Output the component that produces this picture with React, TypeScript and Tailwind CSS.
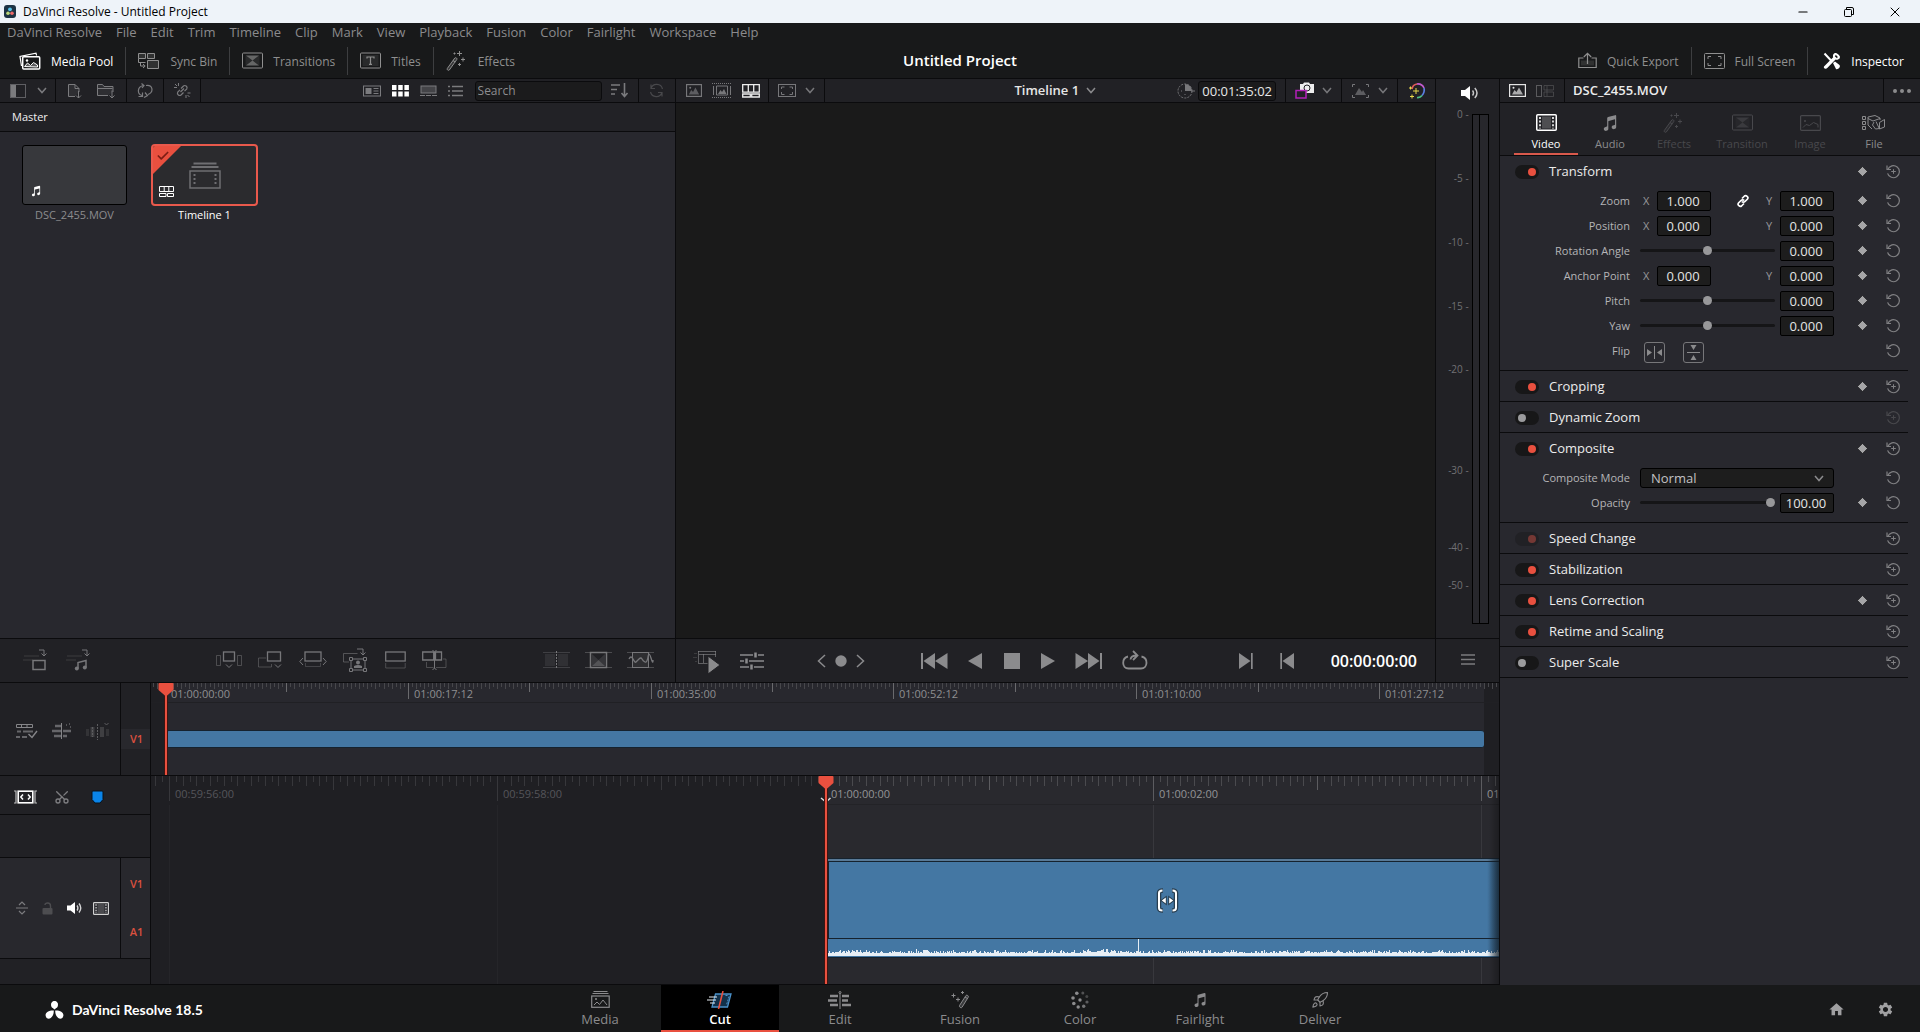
import { useState } from "react";
import type { ReactNode } from "react";
import { clsx } from "clsx";
import { Check, Minus, Rocket, Scissors, X } from "lucide-react";
import { IoMusicalNotes } from "react-icons/io5";
import { MdHome, MdSettings } from "react-icons/md";

type IconProps = { w: number; h: number; className?: string; children: ReactNode };

function Icon({ w, h, className, children }: IconProps) {
  return (
    <svg
      width={w}
      height={h}
      viewBox={`0 0 ${w} ${h}`}
      fill="none"
      stroke="currentColor"
      className={clsx("shrink-0", className)}
      aria-hidden="true"
    >
      {children}
    </svg>
  );
}

/* ---------- icons ---------- */

const MediaPoolIcon = () => (
  <Icon w={22} h={18}>
    <path d="M2.5 14 1 4.5 17 1.2l.6 2.3" strokeWidth="1.2" />
    <rect x="3.7" y="4.7" width="17" height="12.3" rx="1" strokeWidth="1.5" />
    <circle cx="8" cy="8.5" r="1.2" fill="currentColor" stroke="none" />
    <path d="M5.5 14.5 8.5 11l3 2.5 3-3 4 2.5v2z" fill="currentColor" fillOpacity=".3" />
  </Icon>
);

const SyncBinIcon = () => (
  <Icon w={22} h={18}>
    <path d="M.5 1.5h7v5h-7zM9.5 1.5h7v5h-7zM9.5 8.5h11v8h-11z" fill="currentColor" fillOpacity=".2" />
    <path d="M.5 6.5v4h7M2.5 10.5V14h4M5 12l2.200 2L5 16" />
  </Icon>
);

const TransitionIcon = () => (
  <Icon w={21} h={17}>
    <rect x=".5" y="1" width="20" height="15" rx="1" />
    <path d="M4 3.500h13L10.500 8.500zM4 13.500h13L10.500 8.500z" fill="currentColor" fillOpacity=".6" stroke="none" />
    <path d="M3.500 3.500h14v10h-14z" fill="currentColor" fillOpacity=".15" stroke="none" />
  </Icon>
);

const TitlesIcon = () => (
  <Icon w={21} h={17}>
    <rect x=".5" y="1" width="20" height="15" rx="1" />
    <rect x="2.500" y="3" width="16" height="11" fill="currentColor" fillOpacity=".15" stroke="none" />
    <path d="M7 6.500V5h7v1.500M10.500 5v7M9 12.300h3" strokeWidth="1.200" />
  </Icon>
);

const WandIcon = () => (
  <Icon w={22} h={20}>
    <path d="M1.300 17.500 8.800 7c.8-1 2.800.4 2 1.500L3.300 19c-.8 1-2.800-.4-2-1.500zM7 9.500l2.200 1.600" fill="currentColor" fillOpacity=".25" />
    <path d="M13.500 0v5M11 2.500h5M17 6.500v4M15 8.500h4M13.500 12v3M12 13.500h3M8.500 1.500v2M7.500 2.500h2" />
  </Icon>
);

const ExportIcon = () => (
  <Icon w={19} h={17}>
    <path d="M5.500 6H.800v9.500h17.400V6h-4.700" strokeWidth="1.200" />
    <path d="M3 8.500h13v5H3z" fill="currentColor" fillOpacity=".2" stroke="none" />
    <path d="M9.500 12V1.500M5.800 5l3.700-3.700L13.200 5" strokeWidth="1.200" />
  </Icon>
);

const FrameIcon = () => (
  <Icon w={21} h={16}>
    <rect x=".5" y=".5" width="20" height="15" rx="1" />
    <path d="M4 6V3.500h3M14 3.500h3V6M17 10v2.500h-3M7 12.500H4V10" />
  </Icon>
);

const InspectorIcon = () => (
  <Icon w={18} h={18}>
    <path d="M1.500 1.500 9 9.500M15.500 6.500a3.200 3.200 0 0 0-3-4.300M12 6 3 15.500" strokeWidth="2" />
    <path d="M16.500 3.500 14 6.200l-2.200-2 2-3C11 .500 9.300 3 10.200 5.300L1 14.500c-.8 1.500 1 3 2.500 2L12.500 7.600c2.600 1 5-1.300 4-4.100zM10 11l2-1.500 4.500 3.500c1.500 2-1.500 5-3.500 4z" fill="currentColor" stroke="none" />
  </Icon>
);

const PictureIcon = ({ w = 17, h = 13 }: { w?: number; h?: number }) => (
  <svg width={w} height={h} viewBox="0 0 17 13" preserveAspectRatio="none" fill="none" stroke="currentColor" className="shrink-0" aria-hidden="true">
    <rect x=".6" y=".6" width="15.800" height="11.800" strokeWidth="1.200" />
    <path d="M3 10.500 5.500 6l2 2 2.500-4.500 4 7z" fill="currentColor" fillOpacity=".7" stroke="none" />
    <circle cx="4.500" cy="3.700" r="1" fill="currentColor" stroke="none" />
  </svg>
);

const ImageTabIcon = () => (
  <Icon w={21} h={16}>
    <rect x=".6" y=".6" width="19.800" height="14.800" rx="1" strokeWidth="1.200" />
    <path d="M3 12.500 6 9.500l3.500 1 4-3 4.500 2v3" />
    <circle cx="5" cy="6" r="1" fill="currentColor" stroke="none" />
  </Icon>
);

const FilmIcon = ({ w = 21, h = 17 }: { w?: number; h?: number }) => (
  <svg width={w} height={h} viewBox="0 0 21 17" fill="none" stroke="currentColor" className="shrink-0" aria-hidden="true">
    <rect x=".75" y=".75" width="19.500" height="15.500" rx="1" strokeWidth="1.500" />
    <rect x="6" y="2.500" width="9" height="12" fill="currentColor" fillOpacity=".2" stroke="none" />
    <path d="M4 3v11.500M17 3v11.500" strokeWidth="1.600" strokeDasharray="2 1.600" />
  </svg>
);

const SpeakerIcon = () => (
  <Icon w={18} h={14}>
    <path d="M0 4h4l5-4v14L4 10H0z" fill="currentColor" stroke="none" />
    <path d="M11.500 4.500q2 2.500 0 5M13.800 2q4.400 5 0 10" strokeWidth="1.500" opacity=".75" />
  </Icon>
);

const FileTabIcon = () => (
  <Icon w={24} h={16}>
    <path d="M.5 1.500h3v3h-3zM.5 6.500h3v3h-3zM.5 11.500h3v3h-3zM6 2l7-1.500L18 3v2M6 2v8l4 4M6 3.500 11 6l7-2.500M14 6.500l3.500 7.500V8M22.500 4.500l-5 3v6.500l5-2zM12 7l-1.500 3 3 4 4-.5" />
  </Icon>
);

const LinkIcon = () => (
  <Icon w={14} h={14}>
    <path d="M6 4.500 8.500 2c1.500-1.300 4.500 1 3 3L9 7.500c-1 1-2.500.8-3.200 0M8 9.500 5.500 12c-1.500 1.300-4.500-1-3-3L5 6.500c1-1 2.500-.8 3.200 0" strokeWidth="1.700" />
  </Icon>
);

const ResetIcon = ({ plus = false }: { plus?: boolean }) => (
  <Icon w={15} h={15}>
    <path d="M1.800 5.500a6 6 0 1 1-.2 3.800" strokeWidth="1.200" />
    <path d="M1 1.500v4h4" strokeWidth="1.200" />
    {plus && <path d="M7.500 5.200v4.600M5.200 7.500h4.600" />}
  </Icon>
);

const Chevron = ({ className }: { className?: string }) => (
  <Icon w={10} h={7} className={className}>
    <path d="m1 1 4 4.500L9 1" strokeWidth="1.500" />
  </Icon>
);

/* ---------- shared bits ---------- */

function IconButton({ label, className, children }: { label: string; className?: string; children: ReactNode }) {
  return (
    <button type="button" aria-label={label} className={clsx("flex shrink-0 items-center justify-center", className)}>
      {children}
    </button>
  );
}

const Divider = () => <div className="w-px self-stretch bg-[#0b0b0d]" />;

/* ---------- top ---------- */

const MENUS = [
  "DaVinci Resolve", "File", "Edit", "Trim", "Timeline", "Clip", "Mark", "View",
  "Playback", "Fusion", "Color", "Fairlight", "Workspace", "Help",
];

function TitleBar() {
  return (
    <header className="flex h-[23px] items-center bg-[#eef3f9] pr-[2px] pl-1 text-xs text-black">
      <Icon w={12} h={13}>
        <rect width="12" height="13" rx="3" fill="#1d3344" stroke="none" />
        <circle cx="6" cy="4.300" r="1.900" fill="#58c3e8" stroke="none" />
        <circle cx="4" cy="8.300" r="1.800" fill="#bcd77a" stroke="none" />
        <circle cx="8" cy="8.300" r="1.800" fill="#ee6a6a" stroke="none" />
      </Icon>
      <span className="ml-[7px] flex-1">DaVinci Resolve - Untitled Project</span>
      <IconButton label="Minimize" className="w-[46px]"><Minus size={14} strokeWidth={2} /></IconButton>
      <IconButton label="Restore" className="w-[46px]">
        <Icon w={10} h={10}>
          <rect x=".5" y="2.500" width="7" height="7" rx="1" />
          <path d="M2.500 2V.500H8Q9.500.500 9.500 2v5.500H8" />
        </Icon>
      </IconButton>
      <IconButton label="Close" className="w-[46px]"><X size={16} strokeWidth={1.500} /></IconButton>
    </header>
  );
}

function ToolbarButton({ icon, label, active }: { icon: ReactNode; label: string; active?: boolean }) {
  return (
    <button type="button" className={clsx("flex items-center gap-[10px] px-3", active ? "text-white" : "text-[#8f8f8f]")}>
      {icon}
      <span className="pt-[2px]">{label}</span>
    </button>
  );
}

function TopToolbar() {
  const sep = <div className="h-7 w-px bg-[#3d3e40]" />;
  return (
    <div className="grid h-9 grid-cols-[1fr_auto_1fr] items-center border-b border-[#0b0b0d] text-xs">
      <div className="flex items-center pl-[7px]">
        <ToolbarButton icon={<MediaPoolIcon />} label="Media Pool" active />
        {sep}
        <ToolbarButton icon={<SyncBinIcon />} label="Sync Bin" />
        {sep}
        <ToolbarButton icon={<TransitionIcon />} label="Transitions" />
        {sep}
        <ToolbarButton icon={<TitlesIcon />} label="Titles" />
        {sep}
        <ToolbarButton icon={<WandIcon />} label="Effects" />
      </div>
      <h1 className="pb-[2px] text-[15px] font-semibold text-white">Untitled Project</h1>
      <div className="flex items-center justify-end pr-1">
        <ToolbarButton icon={<ExportIcon />} label="Quick Export" />
        {sep}
        <ToolbarButton icon={<FrameIcon />} label="Full Screen" />
        {sep}
        <div className="w-[3px]" />
        <ToolbarButton icon={<InspectorIcon />} label="Inspector" active />
      </div>
    </div>
  );
}

/* ---------- media pool ---------- */

function MediaPool() {
  return (
    <section className="flex w-[45%] flex-col bg-[#28282e]">
      <div className="flex h-6 items-center border-b border-[#0b0b0d] bg-[#212125] text-[#7b7b7e]">
        <div className="flex w-[55px] items-center justify-between pr-2 pl-[10px]">
          <IconButton label="Bin list">
            <Icon w={16} h={14}>
              <rect x=".5" y=".5" width="15" height="13" opacity=".7" />
              <rect x="1" y="1" width="5" height="12" fill="currentColor" stroke="none" />
            </Icon>
          </IconButton>
          <IconButton label="Bin list options"><Chevron /></IconButton>
        </div>
        <Divider />
        <div className="flex w-[70px] items-center justify-between px-[11px]">
          <IconButton label="Import media">
            <Icon w={15} h={16}>
              <path d="M8 13.500H1.500V1.500H8l4 4V9M8 1.500v4h4" fill="currentColor" fillOpacity=".15" />
              <path d="M11.500 8v7M9 12.500l2.500 2.500 2.500-2.500" />
            </Icon>
          </IconButton>
          <IconButton label="Import media folder">
            <Icon w={18} h={16}>
              <path d="M11 12.500H.500V1.500h5l1.500 2h9V9M.500 5.500h15" fill="currentColor" fillOpacity=".15" />
              <path d="M15 7.500v7.500M12.500 12.500 15 15l2.500-2.500" />
            </Icon>
          </IconButton>
        </div>
        <Divider />
        <IconButton label="Sync clips" className="w-9">
          <Icon w={16} h={15}>
            <path d="M5 12.500C0 11 0 3.500 6.500 2.500M4.500.500l2.500 2-2 2.500M9 2.500C16 1.500 17 9 11 11.500M8 9.500l2.500 3-3.500 2M1.500 13.500h4v-4" strokeWidth="1.200" />
          </Icon>
        </IconButton>
        <Divider />
        <IconButton label="Unlink" className="w-9">
          <Icon w={17} h={15}>
            <path d="M7 5.500 9.500 3c1.500-1.300 4.500.5 3.300 2.800L10.500 8.200M9.500 9.500 7 12c-1.500 1.300-4.500-.5-3.300-2.800L6 6.800M6.500 9l3.500-3.500" strokeWidth="1.200" />
            <path d="M4.500 0v3M1 1l2 2M0 4.500h3M16.500 10h-3M15.500 14l-2-2M12 15v-3" />
          </Icon>
        </IconButton>
        <Divider />
        <div className="ml-auto flex items-center gap-[11px] pr-3">
          <IconButton label="Metadata view">
            <Icon w={18} h={12}>
              <rect x=".5" y="1" width="17" height="10" />
              <rect x="2.500" y="3" width="6" height="6" fill="currentColor" stroke="none" />
              <path d="M10.500 3.500h5M10.500 6h5M10.500 8.500h5" />
            </Icon>
          </IconButton>
          <IconButton label="Thumbnail view" className="text-white">
            <Icon w={17} h={12}>
              <path d="M0 0h4.500v5H0zM6.200 0h4.500v5H6.200zM12.400 0h4.500v5h-4.500zM0 6.500h4.500v5H0zM6.200 6.500h4.500v5H6.200zM12.400 6.500h4.500v5h-4.500z" fill="currentColor" stroke="none" />
            </Icon>
          </IconButton>
          <IconButton label="Strip view">
            <Icon w={17} h={12}>
              <rect x="1" y="1" width="15" height="7" fill="currentColor" fillOpacity=".4" />
              <path d="M0 10.500h5M6 10.500h5M12 10.500h5" />
            </Icon>
          </IconButton>
          <IconButton label="List view">
            <Icon w={15} h={12}>
              <path d="M0 1.500h2M4 1.500h11M0 6h2M4 6h11M0 10.500h2M4 10.500h11" strokeWidth="1.600" />
            </Icon>
          </IconButton>
        </div>
        <input
          aria-label="Search media"
          placeholder="Search"
          className="h-5 w-[127px] rounded-[3px] border border-[#0b0b0d] bg-[#1b1b1c] px-[2px] text-xs text-[#ccc] placeholder:text-[#8d8d8f]"
        />
        <IconButton label="Sort" className="w-9 pl-px">
          <Icon w={18} h={15}>
            <path d="M0 2h9M0 6.500h6M0 11h4" strokeWidth="1.600" />
            <path d="M13.500 0v13M10.500 10l3 3.500 3-3.500" strokeWidth="1.600" />
          </Icon>
        </IconButton>
        <Divider />
        <IconButton label="Refresh" className="w-9 text-[#48484b]">
          <Icon w={15} h={15}>
            <path d="M13.500 6A6 6 0 0 0 2 5.500M1.500 9A6 6 0 0 0 13 9.500M2 1.500v4h4M13 13.500v-4H9" strokeWidth="1.200" />
          </Icon>
        </IconButton>
      </div>
      <div className="flex h-[29px] items-center border-b border-[#0b0b0d] bg-[#222226] pl-3 text-[11px] text-[#f0f0f0]">Master</div>

      <div className="flex flex-1 items-start gap-6 px-[22px] pt-3 text-[11px]">
        <figure className="w-[105px] text-center text-[#8c8c8e]">
          <div className="mt-px flex h-[60px] items-end rounded-[3px] border border-black bg-[#37383c] p-[7px] text-white">
            <IoMusicalNotes size={12} />
          </div>
          <figcaption className="mt-[2px]">DSC_2455.MOV</figcaption>
        </figure>
        <figure className="w-[107px] text-center text-white">
          <div className="relative flex h-[62px] items-center justify-center overflow-hidden rounded-[4px] border-2 border-[#e9594c] bg-[#2b2b2e] text-[#6f6f72]">
            <Icon w={32} h={27}>
              <path d="M4.500 1.500h23M2.500 5h27" strokeWidth="2" />
              <rect x="1" y="9" width="30" height="17" strokeWidth="1.500" />
              <path d="M5.500 12v12M26.500 12v12" strokeDasharray="2 2" strokeWidth="2" />
            </Icon>
            <svg width="28" height="28" className="absolute top-0 left-0" aria-hidden="true">
              <path d="M0 0h28L0 28z" fill="#e9503f" />
            </svg>
            <Check size={14} strokeWidth={3} className="absolute top-[3px] left-[3px] text-[#7d1d14]" />
            <Icon w={15} h={11} className="absolute bottom-[7px] left-[6px] text-white">
              <path d="M.5.5h14v5H.5zM5.200.500v5M9.800.500v5M.5 7.500H7v3H.5zM8.500 7.500h6v3h-6z" />
            </Icon>
          </div>
          <figcaption className="mt-px">Timeline 1</figcaption>
        </figure>
      </div>

      <div className="flex h-11 items-center border-t border-[#0b0b0d] bg-[#212125] pr-[21px] pb-[2px] pl-[22px] text-[#77777a]">
        <div className="flex gap-[17px]">
          <IconButton label="Append clip">
            <Icon w={26} h={24}>
              <path d="M2 8h15M1 12h10" opacity=".3" />
              <path d="M17 2h5v6M19.500 5.500 22 8l2.500-2.500" />
              <rect x="11" y="12.500" width="12" height="9" strokeWidth="1.500" />
            </Icon>
          </IconButton>
          <IconButton label="Append audio">
            <Icon w={26} h={24}>
              <path d="M2 8h15M1 12h10" opacity=".3" />
              <path d="M17 2h5v6M19.500 5.500 22 8l2.500-2.500" />
              <path d="M13 20.500v-6l8-2v7" strokeWidth="1.500" />
              <circle cx="11.800" cy="20.500" r="2" fill="currentColor" stroke="none" />
              <circle cx="19.800" cy="19.500" r="2" fill="currentColor" stroke="none" />
            </Icon>
          </IconButton>
        </div>
        <div className="mx-auto flex gap-4 pl-[29px]">
          <IconButton label="Smart insert">
            <Icon w={26} h={22}>
              <path d="M.5 6.500h4v10h-4zM21.500 6.500h4v10h-4z" opacity=".5" />
              <rect x="7.500" y="3" width="11" height="9" strokeWidth="1.300" />
              <path d="m10 15.500 3 3 3-3" />
            </Icon>
          </IconButton>
          <IconButton label="Append">
            <Icon w={25} h={22}>
              <path d="M8 9H.500v9h13v-3" opacity=".5" />
              <rect x="9.500" y="3" width="13" height="9" strokeWidth="1.300" />
              <path d="m17 15.500 3 3 3-3" />
            </Icon>
          </IconButton>
          <IconButton label="Ripple overwrite">
            <Icon w={28} h={22}>
              <rect x="6" y="3" width="16" height="9" strokeWidth="1.300" />
              <path d="M6.500 14v3.500h15V14" opacity=".4" />
              <path d="M4 9 .800 12.500 4 16M24 9l3.200 3.500L24 16" />
            </Icon>
          </IconButton>
          <IconButton label="Close up">
            <Icon w={26} h={24}>
              <path d="M6 14H.500V5.500h14" opacity=".6" />
              <path d="M14 1h6v6M17.500 4.500 20 7l2.500-2.500" />
              <path d="M8 11h14v11H8z" />
              <path d="M6.500 9.500h3v3h-3zM20.500 9.500h3v3h-3zM6.500 20.500h3v3h-3zM20.500 20.500h3v3h-3z" fill="#212125" />
              <path d="M11 20v-2q4-2 8 0v2z" fill="currentColor" stroke="none" />
              <circle cx="15" cy="14.500" r="2" fill="currentColor" stroke="none" />
            </Icon>
          </IconButton>
          <IconButton label="Place on top">
            <Icon w={21} h={20}>
              <rect x=".7" y="2" width="19.500" height="9" strokeWidth="1.300" />
              <path d="M.700 13v5h19.500v-5" opacity=".5" />
            </Icon>
          </IconButton>
          <IconButton label="Source overwrite">
            <Icon w={25} h={20}>
              <path d="M.700 2h11v8h-11zM13.500 2h6v8h-6z" strokeWidth="1.300" />
              <path d="M4.500 12v5.500h7M14 17.500h10V9h-3" opacity=".5" />
              <path d="M10.500 0 12.500 2v16l-2 2M14.500 0l-2 2v16l2 2" />
            </Icon>
          </IconButton>
        </div>
        <div className="flex gap-[15px]">
          <IconButton label="Cut">
            <Icon w={27} h={18}>
              <path d="M0 1.500h27M0 16.500h27" opacity=".35" />
              <path d="M2 3h10v12H2zM15 3h10v12H15z" fill="currentColor" fillOpacity=".18" stroke="none" />
              <path d="M13.500 0v18" strokeDasharray="2 1" />
            </Icon>
          </IconButton>
          <IconButton label="Dissolve">
            <Icon w={27} h={18}>
              <path d="M0 1.500h27M0 16.500h27" opacity=".5" />
              <rect x="5.500" y="1.500" width="16" height="15" strokeWidth="1.500" />
              <path d="m7 15 6.500-6 6.500 6z" fill="currentColor" fillOpacity=".6" stroke="none" />
              <path d="M7 3v12l6.500-6zM20 3v12l-6.500-6z" fill="currentColor" fillOpacity=".25" stroke="none" />
            </Icon>
          </IconButton>
          <IconButton label="Smooth cut">
            <Icon w={27} h={18}>
              <path d="M0 1.500h27M0 16.500h27" opacity=".5" />
              <rect x="5.500" y="1.500" width="16" height="15" fill="currentColor" fillOpacity=".15" />
              <path d="M2 8q2-4 4 0t3 3 3-3 3 0 3 3 3-5 3 1 2 2" strokeWidth="1.300" />
            </Icon>
          </IconButton>
        </div>
      </div>
    </section>
  );
}

/* ---------- viewer ---------- */

function Viewer() {
  return (
    <section className="flex min-w-0 flex-1 flex-col border-l border-[#0b0b0d] bg-[#1a1a1a]">
      <div className="grid h-6 grid-cols-[1fr_auto_1fr] border-b border-[#0b0b0d] bg-[#212125] text-[#77777a]">
        <div className="flex items-center">
          <div className="flex w-[92px] items-center gap-[10px] pl-[10px]">
            <IconButton label="Source clip"><PictureIcon w={16} h={13} /></IconButton>
            <IconButton label="Source tape">
              <Icon w={20} h={15}>
                <path d="M0 .5h20M0 14.500h20" strokeDasharray="1 1" />
                <path d="M4.500 3h11v9h-11zM1.500 3v9M18.500 3v9" />
                <path d="m6 11 2.500-4 1.500 2 2-3 2.500 5z" fill="currentColor" stroke="none" />
              </Icon>
            </IconButton>
            <IconButton label="Timeline viewer" className="text-[#ededed]">
              <Icon w={18} h={14}>
                <path d="M.7.700h16.600v7.500H.700zM6.300.700v7.500M11.700.700v7.500M.7 10h7.600v3H.700zM9.700 10h7.600v3H9.700z" strokeWidth="1.300" />
              </Icon>
            </IconButton>
          </div>
          <Divider />
          <button type="button" aria-label="Viewer size" className="flex w-[55px] items-center justify-between px-[9px]">
            <Icon w={18} h={14}>
              <rect x=".5" y=".5" width="17" height="12" />
              <path d="M3.500 5V3h3M11.500 3h3v2M14.500 8v2.500h-3M6.500 10.500h-3V8" />
            </Icon>
            <Chevron />
          </button>
          <Divider />
        </div>
        <button type="button" className="flex items-center gap-[7px] text-[13px] font-semibold text-[#e6e6e6]">
          Timeline 1
          <Chevron className="text-[#8b8b8d]" />
        </button>
        <div className="flex items-center justify-end">
          <Icon w={18} h={16} className="mr-[3px]">
            <circle cx="8" cy="8" r="7" strokeDasharray="2 1.200" />
            <path d="M8 8V1a7 7 0 0 1 7 7z" fill="currentColor" stroke="none" />
            <path d="M14 8h4M4 8h1M8 11v1" />
          </Icon>
          <div className="rounded-[3px] border border-[#0b0b0d] bg-[#1b1b1c] px-[3px] text-[13px] leading-[18px] text-[#e8e8e8]">00:01:35:02</div>
          <div className="w-[9px]" />
          <Divider />
          <button type="button" aria-label="Camera" className="flex w-[55px] items-center justify-between px-[9px]">
            <Icon w={20} h={17}>
              <path d="M5 2h3l1-1.500h5L15 2h4v9H5z" fill="#eee" stroke="none" />
              <circle cx="12" cy="6" r="3" stroke="#212125" />
              <rect x="1" y="8.500" width="10" height="7.500" fill="#212125" stroke="#b31fb8" strokeWidth="1.500" />
            </Icon>
            <Chevron />
          </button>
          <Divider />
          <button type="button" aria-label="Transform overlay" className="flex w-[55px] items-center justify-between px-[9px]">
            <Icon w={19} h={16}>
              <path d="M1.500 4V1.500H4M15 1.500h2.500V4M17.500 12v2.500H15M4 14.500H1.500V12" />
              <path d="m4 12 4-7 3 4 1-2 3 5z" fill="currentColor" stroke="none" opacity=".7" />
            </Icon>
            <Chevron />
          </button>
          <Divider />
          <IconButton label="Color enhance" className="w-[37px]">
            <Icon w={19} h={16}>
              <path d="M5 6a6 6 0 0 1 5-5" stroke="#e05a5a" strokeWidth="1.700" />
              <path d="M10 1q5-.500 7 4" stroke="#c45bd0" strokeWidth="1.700" />
              <path d="M17 5q1 4-2 7.500" stroke="#5a7ee0" strokeWidth="1.700" />
              <path d="M15 12.500q-2 2.500-5 2" stroke="#4fc087" strokeWidth="1.700" />
              <path d="M9 5v6M6 8h6M3.500 3.500v3M2 5h3M5 11.500v4M3 13.500h4" stroke="#e8d84a" />
            </Icon>
          </IconButton>
        </div>
      </div>

      <div className="flex-1" />

      <div className="flex h-11 items-center border-t border-[#0b0b0d] bg-[#212125] pl-[17px] text-[#8b8b8d]">
        <IconButton label="Fast review" className="mr-[18px]">
          <Icon w={29} h={28}>
            <path d="M5 4.500h18M6 7.500h17M6 16.500h9M5.500 4v13M10.500 7v9M22.500 4v6" opacity=".6" />
            <path d="M1 6.500h3M0 10.500h4M2 14.500h2" opacity=".25" />
            <path d="M15 9v18l12-9z" fill="currentColor" stroke="#212125" strokeWidth="1" />
          </Icon>
        </IconButton>
        <IconButton label="Tools" className="mr-[53px]">
          <Icon w={24} h={18}>
            <path d="M0 3h13M18 3h6M0 9h4M9 9h15M0 15h9M14 15h10" strokeWidth="1.600" />
            <path d="M15.500.500v5M6.500 6.500v5M11.500 12.500v5" strokeWidth="2.500" />
          </Icon>
        </IconButton>
        <IconButton label="Previous keyframe"><Icon w={9} h={14}><path d="M8 1 1.500 7 8 13" strokeWidth="1.500" /></Icon></IconButton>
        <IconButton label="Keyframe" className="mx-[9px]"><Icon w={12} h={12}><circle cx="6" cy="6" r="5.700" fill="currentColor" stroke="none" /></Icon></IconButton>
        <IconButton label="Next keyframe" className="mr-14"><Icon w={9} h={14}><path d="m1 1 6.500 6L1 13" strokeWidth="1.500" /></Icon></IconButton>
        <IconButton label="First frame" className="mr-5">
          <Icon w={27} h={16}><path d="M0 0h2v16H0zM14 0v16L2.500 8zM26.500 0v16L14 8z" fill="currentColor" stroke="none" /></Icon>
        </IconButton>
        <IconButton label="Play reverse" className="mr-[22px]">
          <Icon w={14} h={16}><path d="M14 0v16L0 8z" fill="currentColor" stroke="none" /></Icon>
        </IconButton>
        <IconButton label="Stop" className="mr-[21px]">
          <Icon w={16} h={16}><path d="M0 0h16v16H0z" fill="currentColor" stroke="none" /></Icon>
        </IconButton>
        <IconButton label="Play" className="mr-5">
          <Icon w={14} h={16}><path d="M0 0v16l14-8z" fill="currentColor" stroke="none" /></Icon>
        </IconButton>
        <IconButton label="Last frame" className="mr-5">
          <Icon w={27} h={16}><path d="M25 0h2v16h-2zM.500 0v16L13 8zM13 0v16l11.500-8z" fill="currentColor" stroke="none" /></Icon>
        </IconButton>
        <IconButton label="Loop">
          <Icon w={26} h={22}>
            <path d="M6 6.500C-.500 8-.500 18.500 6.500 18.500h12.500C26 18.500 26.500 8 19.500 6.500" strokeWidth="1.800" />
            <path d="M8.500 9.500q.500-4 6-4M11 1l4.500 4.500-4.500 4.500" strokeWidth="1.800" />
          </Icon>
        </IconButton>
        <div className="flex-1" />
        <IconButton label="Go to next" className="mr-[27px]">
          <Icon w={14} h={16}><path d="M0 0v16l11.500-8zM12 0h1.700v16H12z" fill="currentColor" stroke="none" /></Icon>
        </IconButton>
        <IconButton label="Go to previous" className="mr-[37px]">
          <Icon w={14} h={16}><path d="M14 0v16L2.500 8zM.3 0H2v16H.3z" fill="currentColor" stroke="none" /></Icon>
        </IconButton>
        <span className="mr-[18px] text-base font-semibold text-white">00:00:00:00</span>
      </div>
    </section>
  );
}

/* dB marks; span is the distance to the next mark on the scale */
const METER_MARKS = [
  { db: "0", span: 64 },
  { db: "-5", span: 64 },
  { db: "-10", span: 64 },
  { db: "-15", span: 63 },
  { db: "-20", span: 102 },
  { db: "-30", span: 77 },
  { db: "-40", span: 38 },
  { db: "-50", span: 39 },
];

function Meter() {
  return (
    <section className="flex w-16 flex-col border-l border-[#0b0b0d] bg-[#212125]">
      <div className="flex justify-center pt-[7px] pr-[15px] pl-[19px] text-white">
        <IconButton label="Mute" className="h-[14px]"><SpeakerIcon /></IconButton>
      </div>
      <div className="flex flex-1 justify-end gap-[3px] pt-[14px] pr-[10px] pb-[14px]">
        <ul className="flex w-9 flex-col text-right text-[10px] text-[#717174]">
          {METER_MARKS.map((m) => (
            <li key={m.db} className="h-0 leading-[0]" style={{ flexGrow: m.span }}>{m.db} -</li>
          ))}
        </ul>
        <div className="grid w-[19px] grid-cols-2 divide-x divide-black border border-black bg-[#27272c]">
          <div />
          <div />
        </div>
      </div>
      <div className="flex h-11 items-center justify-center border-t border-[#0b0b0d] pb-[2px]">
        <IconButton label="Meter options" className="text-[#7b7b7e]">
          <Icon w={14} h={11}><path d="M0 1h14M0 5.500h14M0 10h14" strokeWidth="1.300" /></Icon>
        </IconButton>
      </div>
    </section>
  );
}

/* ---------- timelines ---------- */

const TRACK_START = 15; // px from the canvas edge to 01:00:00:00 in the overview
const OVERVIEW_STEP = 242.8;
const OVERVIEW_LABELS = ["01:00:00:00", "01:00:17:12", "01:00:35:00", "01:00:52:12", "01:01:10:00", "01:01:27:12"];

function OverviewRuler() {
  const ticks = Array.from({ length: 345 }, (_, i) => i - 3);
  return (
    <svg className="absolute inset-0 h-full w-full" aria-label="Overview ruler">
      <path d="M0 19.500h3000" stroke="#202024" />
      {ticks.map((i) => {
        const x = TRACK_START - 0.5 + Math.round((i * OVERVIEW_STEP) / 60);
        const h = i % 60 === 0 ? 16 : i % 30 === 0 ? 9 : i % 2 ? 4 : 6;
        return <path key={i} d={`M${x} 0v${h}`} stroke={h > 6 ? "#6a6a6d" : "#47474b"} />;
      })}
      {OVERVIEW_LABELS.map((t, i) => (
        <text key={t} x={TRACK_START + 5 + Math.round(i * OVERVIEW_STEP)} y="15" fontSize="11" fill="#8f8f91">{t}</text>
      ))}
    </svg>
  );
}

function Playhead({ x }: { x: number }) {
  return (
    <svg className="pointer-events-none absolute inset-0 h-full w-full" aria-hidden="true">
      <path d={`M${x} 10v300`} stroke="#3c1512" strokeWidth="4" />
      <path d={`M${x} 10v300`} stroke="#e9503f" strokeWidth="2" />
      <path d={`M${x - 7.5} 1q0-1 1-1h13q1 0 1 1v6l-7.500 6.500-7.500-6.500z`} fill="#e9503f" />
    </svg>
  );
}

function Overview() {
  return (
    <section className="flex h-[94px] border-y border-[#0b0b0d]">
      <div className="flex w-[121px] items-center gap-[14px] border-r border-[#0b0b0d] bg-[#212125] pt-[3px] pl-[15px] text-[#858588]">
        <IconButton label="Timeline options">
          <Icon w={23} h={16}>
            <path d="M1.500 1.500h16v3h-16zM6.500 1.500v3M12 1.500v3" />
            <path d="M2 8.500h4M8 8.500h10M1 14h4M7 14h5" strokeWidth="1.800" opacity=".7" />
            <path d="m13.500 11 3.500 3.500L22 8" strokeWidth="1.400" />
          </Icon>
        </IconButton>
        <IconButton label="Split clips">
          <Icon w={20} h={16}>
            <path d="M3 3h7M0 8h9M2 13h7M11 8h8M11 13h4" strokeWidth="2.500" opacity=".7" />
            <path d="M9.500 0v16" />
            <path d="M14 2h1M17 1h1M18 4h1" />
          </Icon>
        </IconButton>
        <IconButton label="Boring detector">
          <Icon w={24} h={18} className="opacity-60">
            <path d="M4.500 5h4v10h-4zM14 5h4v10h-4z" fill="currentColor" fillOpacity=".5" stroke="none" />
            <path d="M0 7h3v7H0zM20 7h3v7h-3z" fill="currentColor" fillOpacity=".3" stroke="none" />
            <path d="M6.500 5v10M11.500 2v16" strokeDasharray="2 1" />
            <path d="m18.500 1 2 2 2-2" />
          </Icon>
        </IconButton>
      </div>
      <div className="flex w-[30px] items-start border-r border-[#0b0b0d] bg-[#212125] pt-[46px]">
        <button type="button" className="h-5 w-full bg-[#28282d] pl-[2px] text-[11px] font-semibold text-[#d9503f]">V1</button>
      </div>
      <div className="relative flex min-w-0 flex-1 bg-[#1f1f23]">
        <div className="mx-[15px] flex-1 bg-[#28282e] pt-[47px]">
          <div className="h-[18px] rounded-[3px] border-y border-[#15222e] bg-[#4477a3]" />
        </div>
        <OverviewRuler />
        <Playhead x={TRACK_START} />
      </div>
    </section>
  );
}

const DETAIL_STEP = 328; // two seconds
const DETAIL_LABELS = ["00:59:56:00", "00:59:58:00", "01:00:00:00", "01:00:02:00", "01:00:04:00"];

function DetailRuler() {
  const ticks = Array.from({ length: 198 }, (_, i) => i - 2);
  return (
    <svg className="absolute inset-0 h-full w-full" aria-label="Timeline ruler">
      <path d="M675 28.500h3000" stroke="#232327" />
      {ticks.map((i) => {
        const x = 18.5 + Math.round((i * DETAIL_STEP) / 48);
        const dim = x < 674;
        const h = i % 48 === 0 ? 25 : i % 24 === 0 ? 14 : i % 2 ? 6 : 10;
        return <path key={i} d={`M${x} 0v${h}`} stroke={dim ? "#37373b" : h > 10 ? "#5c5c60" : "#4a4a4e"} />;
      })}
      {DETAIL_LABELS.map((t, i) => (
        <g key={t}>
          <text x={24 + i * DETAIL_STEP} y="22" fontSize="11" fill={i < 2 ? "#55555a" : "#949496"}>{t}</text>
          <path d={`M${18.5 + i * DETAIL_STEP} 29v180`} stroke={i < 2 ? "#252529" : "#38383d"} />
        </g>
      ))}
    </svg>
  );
}

// Low room-tone level with small peaks, one bar per pixel
function wavePath(width: number) {
  let seed = 7;
  let d = "M0 18";
  for (let x = 0; x < width; x++) {
    seed = (seed * 16807) % 2147483647;
    const r = seed / 2147483647;
    const swell = Math.sin(x / 37) + Math.sin(x / 13);
    const h = x === 310 ? 18 : 4 + Math.round(r * r * r * r * 2 + (swell > 1 ? r * 2 : r));
    d += `V${18 - h}h1`;
  }
  return d + "V18z";
}

function TimelineClip() {
  return (
    <div className="relative h-[100px] border-y border-[#15222e] bg-[#4477a3]">
      <div className="h-[3px] border-b border-[#15222e] bg-[#587996]" />
      <div className="flex h-[77px] items-start border-b border-l border-[#15222e] pt-[26px] pl-[326px]">
        <Icon w={25} h={26}>
          <path d="M8 2.500Q4 2.500 4 5v15q0 2.500 4 2.500M17 2.500q4 0 4 2.500v15q0 2.500-4 2.500" stroke="#2a3f50" strokeWidth="4.500" />
          <path d="M7.500 2.500Q4 2.500 4 5v15q0 2.500 3.500 2.500M17.500 2.500q3.500 0 3.500 2.500v15q0 2.500-3.500 2.500" stroke="#fff" strokeWidth="2" />
          <path d="M10.800 9.500v6L6.800 12.500zM14.200 9.500v6l4-3z" fill="#fff" stroke="#2a3f50" strokeWidth="2" paintOrder="stroke" />
        </Icon>
      </div>
      <svg className="block h-[17px] w-full" aria-label="Audio waveform">
        <path d={wavePath(1800)} fill="#e6eef5" />
      </svg>
      <div className="absolute inset-y-0 right-0 w-3 bg-linear-to-r from-transparent to-[#1a2b3a]/70" />
    </div>
  );
}

function DetailTimeline() {
  return (
    <section className="flex h-[209px] border-b border-[#0b0b0d]">
      <div className="flex w-[151px] flex-col border-r border-[#0b0b0d] bg-[#212125]">
        <div className="flex h-[39px] items-center border-b border-[#0b0b0d] pt-1 pl-[13px]">
          <IconButton label="Trim mode" className="text-white">
            <Icon w={25} h={14}>
              <rect x="5.200" y="1.200" width="14.600" height="11.600" strokeWidth="1.600" />
              <path d="M1 1h2v12H1M24 1h-2v12h2" strokeWidth="1.200" opacity=".7" />
              <path d="M10 4.500 7.800 7 10 9.500M15 4.500 17.200 7 15 9.500" strokeWidth="1.500" />
            </Icon>
          </IconButton>
          <IconButton label="Split" className="ml-4 text-[#7d7d80]"><Scissors size={16} strokeWidth={2} className="-rotate-90" /></IconButton>
          <IconButton label="Marker" className="ml-[21px]">
            <Icon w={13} h={14}>
              <path d="M1 2q0-1 1-1h9q1 0 1 1v7.500L9 13H4L1 9.500z" fill="#0a84e8" stroke="#08121c" />
            </Icon>
          </IconButton>
        </div>
        <div className="h-[43px] border-b border-[#0b0b0d]" />
        <div className="flex h-[101px] border-b border-[#0b0b0d] bg-[#28282d]">
          <div className="flex w-[121px] items-center gap-[14px] border-r border-[#0b0b0d] pl-4 text-[#7b7b7e]">
            <IconButton label="Track height">
              <Icon w={12} h={14}>
                <path d="M0 7h12M3 4l3-3 3 3M3 10l3 3 3-3" strokeWidth="1.200" />
              </Icon>
            </IconButton>
            <IconButton label="Lock track" className="text-[#4d4d50]">
              <Icon w={11} h={13}>
                <rect x=".5" y="6" width="10" height="6.500" rx="1" fill="currentColor" stroke="none" />
                <path d="M3 3q0-2 2.700-2Q8.500 1 8.500 4v2" strokeWidth="1.400" />
              </Icon>
            </IconButton>
            <IconButton label="Mute track" className="-mr-[3px] text-white">
              <Icon w={15} h={14}>
                <path d="M0 4.500h3.500L8 1v12L3.500 9.500H0z" fill="currentColor" stroke="none" />
                <path d="M10 4.500q1.800 2.500 0 5M12 2.500q3.500 4.500 0 9" strokeWidth="1.400" opacity=".8" />
              </Icon>
            </IconButton>
            <IconButton label="Video track" className="text-[#d2d2d2]"><FilmIcon w={16} h={13} /></IconButton>
          </div>
          <div className="flex flex-1 flex-col items-center justify-center gap-8 pl-[2px] text-[11px] leading-4 font-semibold text-[#d9503f]">
            <button type="button">V1</button>
            <button type="button">A1</button>
          </div>
        </div>
      </div>
      <div className="relative min-w-0 flex-1 overflow-hidden bg-[#1f1f23] pl-[675px]">
        <div className="h-full bg-[#29292e]" />
        <DetailRuler />
        <div className="absolute top-[82px] right-0 left-[677px]">
          <TimelineClip />
        </div>
        <svg className="absolute inset-0 h-full w-full" aria-hidden="true">
          <path d="m670 22 5 4 4.500-4" stroke="#ddd" strokeWidth="1.500" fill="none" />
        </svg>
        <Playhead x={675} />
        <div className="absolute inset-y-0 right-0 w-[10px] bg-linear-to-r from-transparent to-black/30" />
      </div>
    </section>
  );
}

/* ---------- inspector ---------- */

type Param =
  | { kind: "xy"; label: string; x: string; y: string; linked?: boolean }
  | { kind: "slider"; label: string; value: string; pos: number };

const TRANSFORM: Param[] = [
  { kind: "xy", label: "Zoom", x: "1.000", y: "1.000", linked: true },
  { kind: "xy", label: "Position", x: "0.000", y: "0.000" },
  { kind: "slider", label: "Rotation Angle", value: "0.000", pos: 50 },
  { kind: "xy", label: "Anchor Point", x: "0.000", y: "0.000" },
  { kind: "slider", label: "Pitch", value: "0.000", pos: 50 },
  { kind: "slider", label: "Yaw", value: "0.000", pos: 50 },
];

const COMPOSITE: Param[] = [{ kind: "slider", label: "Opacity", value: "100.00", pos: 100 }];

const KeyReset = ({ name, diamond = true, plus = false, dim = false }: { name: string; diamond?: boolean; plus?: boolean; dim?: boolean }) => (
  <div className="ml-auto flex items-center pr-[7px]">
    {diamond && (
      <IconButton label={`${name} keyframe`} className="mr-[18px] text-[#a5a5a7]">
        <Icon w={11} h={11}><path d="M5.500.500l5 5-5 5-5-5z" fill="currentColor" stroke="#111" strokeWidth=".6" /></Icon>
      </IconButton>
    )}
    <IconButton label={`Reset ${name}`} className={dim ? "text-[#48484c]" : "text-[#808083]"}><ResetIcon plus={plus} /></IconButton>
  </div>
);

function NumberBox({ label, value }: { label: string; value: string }) {
  return (
    <input
      aria-label={label}
      defaultValue={value}
      className="h-5 w-[54px] rounded-[2px] border border-black bg-[#1d1d1d] pr-[2px] text-center text-[13px] text-[#e4e4e4]"
    />
  );
}

function ParamRow({ param }: { param: Param }) {
  const { label } = param;
  return (
    <div className="flex h-[25px] items-center text-[#b5b5b7]">
      <div className="w-[130px] pt-px text-right">{label}</div>
      <div className="ml-[10px] flex w-[194px] items-center">
        {param.kind === "xy" ? (
          <>
            <span className="w-[17px] pt-px pl-[3px] text-[#98989b]">X</span>
            <NumberBox label={`${label} X`} value={param.x} />
            <span className="ml-[25px] text-white">{param.linked && <LinkIcon />}</span>
            <span className="ml-auto w-[17px] pt-px pl-[3px] text-[#98989b]">Y</span>
            <NumberBox label={`${label} Y`} value={param.y} />
          </>
        ) : (
          <>
            <input
              type="range"
              aria-label={label}
              defaultValue={param.pos}
              className="mr-auto h-[3px] w-[135px] appearance-none rounded-full bg-[#151517] [&::-webkit-slider-thumb]:size-[9px] [&::-webkit-slider-thumb]:appearance-none [&::-webkit-slider-thumb]:rounded-full [&::-webkit-slider-thumb]:bg-[#98989a]"
            />
            <NumberBox label={`${label} value`} value={param.value} />
          </>
        )}
      </div>
      <KeyReset name={label} />
    </div>
  );
}

type SectionProps = {
  title: string;
  on?: boolean;
  faded?: boolean;
  diamond?: boolean;
  dim?: boolean;
  children?: ReactNode;
};

function Section({ title, on = true, faded, diamond = false, dim, children }: SectionProps) {
  const [enabled, setEnabled] = useState(on);
  return (
    <section className="border-b border-[#0b0b0d]">
      <div className="flex h-[30px] items-center">
        <label className="flex items-center gap-[10px] pt-px pl-[15px] text-[13px] text-[#ececec]">
          <input
            type="checkbox"
            checked={enabled}
            onChange={(e) => setEnabled(e.target.checked)}
            className={clsx(
              "flex h-[14px] w-6 appearance-none items-center rounded-full bg-[#171718] px-[3px] before:size-2 before:rounded-full before:bg-[#9b9b9d] checked:justify-end checked:before:bg-[#e9503f]",
              faded && "opacity-40"
            )}
          />
          {title}
        </label>
        <KeyReset name={title} diamond={diamond} plus dim={dim} />
      </div>
      {children && <div className="pt-[2px] pb-[7px] text-[11px]">{children}</div>}
    </section>
  );
}

const TABS = [
  { label: "Video", icon: <FilmIcon />, tone: "text-white", width: "w-16" },
  { label: "Audio", icon: <IoMusicalNotes size={18} />, tone: "text-[#8b8b8d]", width: "w-16" },
  { label: "Effects", icon: <WandIcon />, tone: "text-[#48484c]", width: "w-16" },
  { label: "Transition", icon: <TransitionIcon />, tone: "text-[#48484c]", width: "w-[72px]" },
  { label: "Image", icon: <ImageTabIcon />, tone: "text-[#48484c]", width: "w-16" },
  { label: "File", icon: <FileTabIcon />, tone: "text-[#8b8b8d]", width: "w-16" },
];

function Inspector() {
  return (
    <aside className="flex w-[421px] shrink-0 flex-col border-l border-[#0b0b0d] bg-[#28282e]">
      <div className="flex h-6 items-center border-b border-[#0b0b0d] bg-[#212125]">
        <div className="flex w-[64px] items-center gap-[10px] pl-[9px]">
          <IconButton label="Clip inspector" className="text-[#e4e4e4]"><PictureIcon /></IconButton>
          <IconButton label="Split inspector" className="text-[#5a5a5d]">
            <Icon w={18} h={12}>
              <rect x=".5" y=".5" width="5" height="11" />
              <path d="M8 .5h9.500V5H8zM8 7h9.500v4.500H8zM11 1v10" opacity=".6" />
            </Icon>
          </IconButton>
        </div>
        <Divider />
        <h2 className="ml-2 flex-1 pt-px text-[13px] font-semibold text-[#ececec]">DSC_2455.MOV</h2>
        <Divider />
        <IconButton label="Inspector options" className="w-9 text-[#8b8b8d]">
          <Icon w={18} h={4}>
            <path d="M2 2h.01M9 2h.01M16 2h.01" strokeWidth="4" strokeLinecap="round" />
          </Icon>
        </IconButton>
      </div>
      <div role="tablist" className="flex h-[53px] justify-between border-b border-[#0b0b0d] bg-[#222226] pr-[14px] pl-[14px] text-[11px]">
        {TABS.map((t, i) => (
          <button
            key={t.label}
            type="button"
            role="tab"
            aria-selected={i === 0}
            className={clsx("flex flex-col items-center border-b-2 pt-2", t.tone, t.width, i === 0 ? "border-[#d9594c]" : "border-transparent")}
          >
            <span className="flex h-[23px] items-center">{t.icon}</span>
            <span className="mt-[2px]">{t.label}</span>
          </button>
        ))}
      </div>

      <div className="pr-3">
        <Section title="Transform" diamond>
          {TRANSFORM.map((p) => <ParamRow key={p.label} param={p} />)}
          <div className="flex h-[25px] items-center text-[#b5b5b7]">
            <div className="w-[130px] pt-px text-right">Flip</div>
            <div className="ml-[14px] flex gap-[18px] pt-[3px] text-[#8b8b8d]">
              <IconButton label="Flip horizontal" className="size-[21px] rounded-[3px] border border-[#77777a]">
                <Icon w={15} h={13}><path d="M7.500 0v13" /><path d="M0 3v7l5-3.500zM15 3v7l-5-3.500z" fill="currentColor" stroke="none" /></Icon>
              </IconButton>
              <IconButton label="Flip vertical" className="size-[21px] rounded-[3px] border border-[#77777a]">
                <Icon w={13} h={15}><path d="M0 7.500h13" /><path d="M3.500 0h6L6.500 5zM3.500 15h6l-3-5z" fill="currentColor" stroke="none" /></Icon>
              </IconButton>
            </div>
            <KeyReset name="Flip" diamond={false} />
          </div>
        </Section>
        <Section title="Cropping" diamond />
        <Section title="Dynamic Zoom" on={false} dim />
        <Section title="Composite" diamond>
          <div className="flex h-[25px] items-center text-[#b5b5b7]">
            <label htmlFor="composite-mode" className="w-[130px] pt-px text-right">Composite Mode</label>
            <div className="relative ml-[10px] w-[194px]">
              <select id="composite-mode" className="h-5 w-full appearance-none rounded-[3px] border border-black bg-[#1d1d1d] px-[10px] text-[13px] leading-4 text-[#c2c2c4]">
                <option>Normal</option>
              </select>
              <Chevron className="pointer-events-none absolute top-[7px] right-[10px] text-[#8b8b8d]" />
            </div>
            <KeyReset name="Composite Mode" diamond={false} />
          </div>
          {COMPOSITE.map((p) => <ParamRow key={p.label} param={p} />)}
        </Section>
        <Section title="Speed Change" faded />
        <Section title="Stabilization" />
        <Section title="Lens Correction" diamond />
        <Section title="Retime and Scaling" />
        <Section title="Super Scale" on={false} />
      </div>
    </aside>
  );
}

/* ---------- page bar ---------- */

const PAGES = [
  {
    label: "Media",
    icon: (
      <Icon w={19} h={17}>
        <path d="M2.500.500h14M1.500 2.500h16" />
        <rect x=".7" y="5" width="17.500" height="11.300" strokeWidth="1.200" />
        <path d="m3 14 3-3 2.500 2.500L12 9l4 5" />
        <circle cx="5" cy="8" r="1" fill="currentColor" stroke="none" />
      </Icon>
    ),
  },
  {
    label: "Cut",
    icon: (
      <Icon w={26} h={18} className="mr-[2px]">
        <path d="M9.500 3H25l-3.500 13H6z" fill="#12314a" stroke="#4a90c8" strokeWidth="1.300" />
        <path d="M23 5.500 20.500 14M19.500 4.500h3" stroke="#4a90c8" strokeDasharray="2 1" />
        <path d="M3 6h8M1 9h9M4 12h5" stroke="#e8eef3" />
        <path d="M17 0 12.500 18" stroke="#e9503f" strokeWidth="1.600" />
      </Icon>
    ),
  },
  {
    label: "Edit",
    icon: (
      <Icon w={24} h={18}>
        <path d="M2 5h8M0 9.500h9M2 14h8M14 5h7M14 9.500h6M14 14h9" strokeWidth="2.600" />
        <path d="M12 2v16" />
        <circle cx="12" cy="1.500" r="1" />
      </Icon>
    ),
  },
  {
    label: "Fusion",
    icon: (
      <Icon w={20} h={18}>
        <path d="M9.500 14.500 16 4.500c.8-1 3 .400 2.300 1.600L12 16.300c-.8 1.200-3.200-.3-2.500-1.800z" fill="currentColor" fillOpacity=".3" />
        <path d="m15 6 2.500 1.600" />
        <path d="M3.500 2.500v4M1.500 4.500h4M12.500 0v3M11 1.500h3M8 6.500v4M6 8.500h4" />
      </Icon>
    ),
  },
  {
    label: "Color",
    icon: (
      <Icon w={18} h={18}>
        <g fill="currentColor" stroke="none">
          <circle cx="9" cy="9" r="1.700" />
          <circle cx="5.800" cy="2.200" r="1.800" />
          <circle cx="11.800" cy="2" r="1.500" opacity=".5" />
          <circle cx="2" cy="7" r="1.800" />
          <circle cx="15.800" cy="5.500" r="1.500" opacity=".4" />
          <circle cx="2.800" cy="12.500" r="1.800" />
          <circle cx="16" cy="11" r="1.600" opacity=".6" />
          <circle cx="7.200" cy="16" r="1.700" />
          <circle cx="12.700" cy="15.200" r="1.700" opacity=".8" />
        </g>
      </Icon>
    ),
  },
  { label: "Fairlight", icon: <IoMusicalNotes size={16} /> },
  { label: "Deliver", icon: <Rocket size={18} strokeWidth={1.500} /> },
];

function PageBar() {
  return (
    <footer className="grid h-[47px] grid-cols-[1fr_auto_1fr] items-center bg-[#18191a] text-[#8b8b8d]">
      <div className="flex items-center gap-2 pt-[2px] pl-[45px] text-white">
        <Icon w={19} h={18}>
          <g fill="currentColor" stroke="none">
            <path d="M9.500 8.500C6 6.500 5.500 0 9.500 0s3.500 6.500 0 8.500z" />
            <circle cx="9.500" cy="3.700" r="3.500" />
            <path d="M8.800 9.500C9 14 6 19 2 17.300-2 13 3 9 8.800 9.500zM10.200 9.500C10 14 13 19 17 17.300 21 13 16 9 10.200 9.500z" />
          </g>
        </Icon>
        <span className="font-['Lato',sans-serif] text-[14px] leading-4 font-bold">DaVinci Resolve 18.5</span>
      </div>
      <nav className="flex self-stretch">
        {PAGES.map((p) => (
          <button
            key={p.label}
            type="button"
            className={clsx(
              "mx-px flex w-[118px] flex-col items-center pt-1 text-[13px] leading-[18px]",
              p.label === "Cut" && "border-b-2 border-[#e9503f] bg-black font-semibold text-white"
            )}
          >
            <span className="flex h-[21px] items-center">{p.icon}</span>
            {p.label}
          </button>
        ))}
      </nav>
      <div className="flex items-center justify-end gap-8 pt-[2px] pr-[26px] text-[#a0a0a2]">
        <IconButton label="Home"><MdHome size={17} /></IconButton>
        <IconButton label="Project settings"><MdSettings size={17} /></IconButton>
      </div>
    </footer>
  );
}

export default function App() {
  return (
    <div className="flex h-screen min-h-[900px] w-full min-w-[1500px] flex-col overflow-hidden bg-[#18191a] font-['Open_Sans','Noto_Sans',sans-serif]">
      <TitleBar />
      <nav className="flex h-5 items-center gap-[14px] pl-[7px] text-[13px] text-[#8b8b8d]">
        {MENUS.map((m) => (
          <button key={m} type="button">{m}</button>
        ))}
      </nav>
      <TopToolbar />
      <div className="flex min-h-0 flex-1">
        <main className="flex min-w-0 flex-1 flex-col">
          <div className="flex min-h-0 flex-1">
            <MediaPool />
            <Viewer />
            <Meter />
          </div>
          <Overview />
          <DetailTimeline />
        </main>
        <Inspector />
      </div>
      <PageBar />
    </div>
  );
}
